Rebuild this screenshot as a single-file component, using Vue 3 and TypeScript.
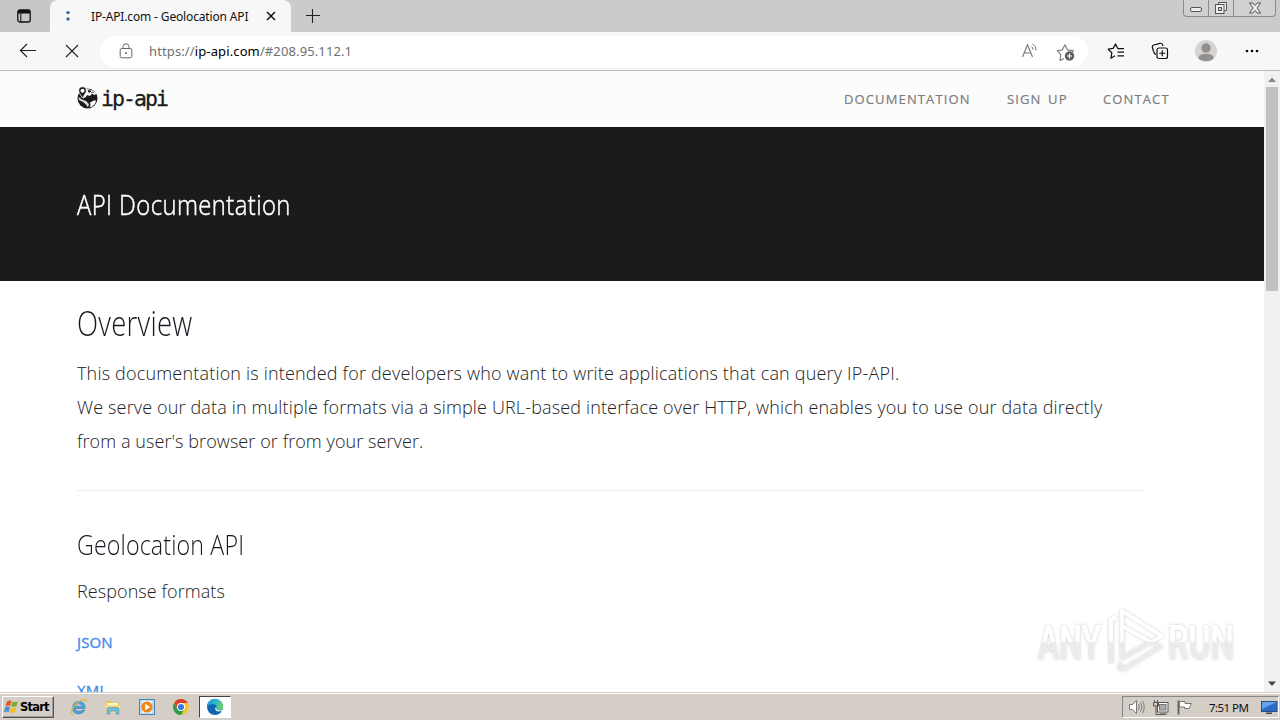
<script setup lang="ts">
interface NavLink { label: string; cls: string }

const links: NavLink[] = [
  { label: 'Documentation', cls: 'l1' },
  { label: 'Sign up', cls: 'l2' },
  { label: 'Contact', cls: 'l3' },
]
</script>

<template>
  <div class="screen">
    <header class="titlebar">
      <div class="tabmenu">
        <svg width="16" height="16" viewBox="0 0 16 16"><rect x="1.8" y="2" width="12.4" height="12" rx="2" fill="none" stroke="#111" stroke-width="1.3" /><path d="M2 3.2Q2 2 3.5 2h9Q14 2 14 3.5V5.6H2z" fill="#111" /><path d="M4.8 5v9" stroke="#111" /></svg>
      </div>
      <div class="tab">
        <svg class="fav" width="6" height="12" viewBox="0 0 6 12"><circle cx="3" cy="2.6" r="1.7" fill="#39699a" /><circle cx="3" cy="9" r="1.7" fill="#39699a" /></svg>
        <span class="tabtext">IP-API.com - Geolocation API</span>
        <svg class="tabx" width="10" height="10" viewBox="0 0 10 10"><path d="M1 1l8 8M9 1L1 9" stroke="#111" stroke-width="1.5" /></svg>
      </div>
      <svg class="plus" width="16" height="16" viewBox="0 0 16 16"><path d="M1 7.5h14M7.5 1v14" stroke="#222" stroke-width="1.1" /></svg>
      <div class="winbtns">
        <div class="wb"><svg width="14" height="8" viewBox="0 0 14 8"><rect x="1.500" y="1.500" width="11" height="4" rx="1.500" fill="#eee" stroke="#555" /></svg></div>
        <div class="wb"><svg width="14" height="14" viewBox="0 0 14 14"><path d="M4.500 3.500v-2h8v8h-2" fill="#eee" stroke="#555" /><rect x="1.500" y="3.500" width="8.500" height="9" fill="#eee" stroke="#555" /><rect x="4.500" y="6.500" width="3" height="3" fill="#ccc" stroke="#555" /></svg></div>
        <div class="wb wide"><svg width="14" height="12" viewBox="0 0 14 12"><path d="M1.500 1h3.200L7 3.600 9.300 1h3.200L9 6l3.500 5H9.300L7 8.400 4.700 11H1.500L5 6z" fill="#eee" stroke="#555" /></svg></div>
      </div>
    </header>

    <div class="toolbar">
      <svg class="back" width="18" height="16" viewBox="0 0 18 16"><path d="M17 7.500H1.500M8 1L1.500 7.500 8 14" fill="none" stroke="#222" stroke-width="1.200" /></svg>
      <svg class="stop" width="14" height="14" viewBox="0 0 14 14"><path d="M1 1l12 12M13 1L1 13" stroke="#222" stroke-width="1.100" /></svg>
      <div class="omni">
        <svg class="lock" width="14" height="16" viewBox="0 0 14 16"><rect x="1.200" y="5.500" width="11.600" height="9.300" rx="1.500" fill="none" stroke="#666" /><path d="M4 5.500V3.600Q4 .8 7 .8t3 2.800V5.500" fill="none" stroke="#666" /><circle cx="7" cy="10" r="1" fill="#666" /></svg>
        <span class="url">https://<b>ip-api.com</b>/#208.95.112.1</span>
        <svg class="read" width="18" height="16" viewBox="0 0 18 16"><path d="M1.500 14L6.500 1.800 11.500 14M3.200 10h6.600" fill="none" stroke="#777" stroke-width="1.100" /><path d="M10.500 3.500q1.500 1.200 1.500 3.200M11.500.8q4 2.500 3.500 6.500" fill="none" stroke="#777" /></svg>
        <svg class="addfav" width="20" height="19" viewBox="0 0 20 19"><path d="M8 15.500l-4 2 .8-5.600L1.300 7.700l5-.8L9 1.800l2.500 5.100 6 .9-2 2" fill="none" stroke="#777" stroke-width="1.100" stroke-linejoin="round" /><circle cx="13.500" cy="13" r="4.700" fill="#5c5c5c" /><path d="M11 13h5M13.500 10.500v5" stroke="#fff" stroke-width="1.200" /></svg>
      </div>
      <svg class="favs" width="18" height="17" viewBox="0 0 18 17"><path d="M8 12.700L4 15.200l.8-5.400L1.200 6.200l5-.8L8.500 1l2.300 4.500H17M10.500 9H17M10.500 12.800H17" fill="none" stroke="#111" stroke-width="1.250" stroke-linejoin="round" /></svg>
      <svg class="coll" width="18" height="18" viewBox="0 0 18 18"><path d="M5 12.300Q3.500 12 3 10.500L1.300 5.500Q1 3.500 2.800 3L9 1.300q2-.3 2.600 1.500L12 4" fill="none" stroke="#111" stroke-width="1.200" /><rect x="6" y="6" width="10.500" height="10.500" rx="2" fill="#f7f7f7" stroke="#111" stroke-width="1.200" /><path d="M8.300 11.250h6M11.250 8.300v6" stroke="#111" stroke-width="1.200" /></svg>
      <svg class="user" width="22" height="22" viewBox="0 0 22 22"><circle cx="11" cy="11" r="11" fill="#d6d4d2" /><circle cx="11" cy="8" r="4.700" fill="#928f8d" /><ellipse cx="11" cy="17.400" rx="7.500" ry="3.700" fill="#928f8d" /></svg>
      <svg class="more" width="14" height="4" viewBox="0 0 14 4"><circle cx="2" cy="2" r="1.300" /><circle cx="7" cy="2" r="1.300" /><circle cx="12" cy="2" r="1.300" /></svg>
    </div>

    <div class="view">
      <main class="page">
        <nav class="nav">
          <div class="brand">
            <svg width="22" height="24" viewBox="0 0 22 24"><circle cx="10.500" cy="12.500" r="10" fill="#1b1b1b" /><path d="M9 2.500L17 5l2.500 3-2.500 1-2-1.500-2 2.500-3-1-1 2-3 1.500 1-4z" fill="#fcfcfc" /><path d="M11 4.500l3 .5-2 1.500zM14 6.500l3-.5" stroke="#1b1b1b" stroke-width=".8" /><path d="M13 16.500l5-2.500 1 1.500-1.500 3-3.500 2.800-1-.3.500-2.500z" fill="#fcfcfc" /><path d="M1.500 11l3.500 2.500 4 1.500 3 3-1 3.500-2-3-3-2.500-4-2z" fill="#fcfcfc" opacity=".85" /><path d="M5.500 12L2 6.500Q.5 1 5.500.7 10.500 1 9 6.500z" fill="#1b1b1b" stroke="#fcfcfc" stroke-width=".8" /><circle cx="5.500" cy="4.800" r="2" fill="#fcfcfc" /></svg>
            <span class="logotext">ip-api</span>
          </div>
          <div class="links"><a v-for="l in links" :key="l.label" :class="l.cls">{{ l.label }}</a></div>
        </nav>
        <section class="hero"><h1>API Documentation</h1></section>
        <section class="body">
          <h2>Overview</h2>
          <p class="intro">
            <span class="p1">This documentation is intended for developers who want to write applications that can query IP-API.</span><br>
            <span class="p2">We serve our data in multiple formats via a simple URL-based interface over HTTP, which enables you to use our data directly</span><br>
            <span class="p3">from a user's browser or from your server.</span>
          </p>
          <hr>
          <h3>Geolocation API</h3>
          <p class="resp">Response formats</p>
          <a class="fmt">JSON</a>
          <a class="fmt xml">XML</a>
        </section>
      </main>
      <aside class="scroll">
        <svg width="16" height="16" viewBox="0 0 16 16"><path d="M4 11l4-4.500 4 4.500z" fill="#868686" /></svg>
        <div class="thumb"></div>
        <svg class="down" width="16" height="16" viewBox="0 0 16 16"><path d="M4 5.500l4 4.500 4-4.500z" fill="#444" /></svg>
      </aside>
    </div>

    <svg class="mark" width="212" height="78" viewBox="0 0 212 78">
      <defs>
        <filter id="glow" x="-20%" y="-20%" width="140%" height="140%"><feDropShadow dx="0" dy="0" stdDeviation="1.800" flood-color="#000" flood-opacity=".24" /></filter>
        <linearGradient id="fade" x1="0" y1="0" x2="0" y2="72" gradientUnits="userSpaceOnUse"><stop offset=".52" stop-color="#fff" /><stop offset=".56" stop-color="#ebebeb" /></linearGradient>
      </defs>
      <g filter="url(#glow)" fill="url(#fade)" stroke="url(#fade)">
        <text class="mt" x="4" y="56" textLength="63" lengthAdjust="spacingAndGlyphs">ANY</text>
        <text class="mt" x="134" y="56" textLength="66" lengthAdjust="spacingAndGlyphs">RUN</text>
        <path d="M77 60V17l5-3" fill="none" stroke-width="4" stroke-linejoin="round" />
        <path d="M88 8v47l40-22zM88 23l36 20M88 67l40-24M86 60v7" fill="none" stroke-width="3.600" stroke-linejoin="round" />
      </g>
    </svg>

    <footer class="taskbar">
      <div class="start">
        <svg width="17" height="16" viewBox="0 0 17 16"><path d="M4 2.500Q6.500.8 8.500 2L7.300 7Q5 6 2.500 7.300z" fill="#e5582c" /><path d="M9.500 2.500Q12 3.800 14.800 2.300L13.500 7Q11 8.400 8.300 7.200z" fill="#79ad36" /><path d="M2.200 8.300Q4.500 7 7 8L5.800 13Q3.500 12 .9 13.300z" fill="#4e8fd2" /><path d="M8 8.300Q10.500 9.500 13.200 8.200L12 13Q9.500 14.400 6.800 13.200z" fill="#f2b92b" /></svg>
        <span>Start</span>
      </div>
      <div class="task"><svg width="18" height="18" viewBox="0 0 18 18"><path d="M15 10.500H5Q5.500 13 8.500 13.300 11 13.300 12.500 12h2.300Q13 16 8.500 16 2.500 15.500 2.500 9.500 3 3.500 9 3.200q6.500.5 6 7.300M5.200 8.200h7Q11.500 5.600 8.800 5.600 6 5.700 5.200 8.200" fill="#45a5dc" fill-rule="evenodd" stroke="#2877b5" stroke-width=".5" /><path d="M3.500 16Q0 16.500 2 11.500 5.500 4.500 12 1.800q4.800-1.500 4.300 2" fill="none" stroke="#dfb83e" stroke-width="1.300" /></svg></div>
      <div class="task"><svg width="18" height="18" viewBox="0 0 18 18"><path d="M2 3h5l1 1.500h7.500V13H2z" fill="#e4c25c" /><path d="M3 5h11v3H3z" fill="#fff7cd" /><path d="M1.500 7h14.800v7.500H1.500z" fill="#f4dc86" /><path d="M3 16v-4.500Q3 9.500 5 9.500h8q2 0 2 2V16h-3v-3H6v3z" fill="#75b9dc" stroke="#4b93b9" stroke-width=".6" /></svg></div>
      <div class="task"><svg width="18" height="18" viewBox="0 0 18 18"><rect x="1.500" y="1.500" width="15" height="15" fill="#bddcf2" stroke="#4c83b5" /><rect x="4" y="3" width="10" height="12" fill="#e8f3fa" /><circle cx="9" cy="9" r="5.600" fill="#ef8519" /><path d="M7.200 5.800L12.200 9l-5 3.200z" fill="#fff" /></svg></div>
      <div class="task"><svg width="18" height="18" viewBox="0 0 18 18"><circle cx="9" cy="9" r="8" fill="#f6c62d" /><path d="M2.070 5A8 8 0 0 1 15.930 5H9A4 4 0 0 0 5.500 11z" fill="#d93f32" /><path d="M2.070 5A8 8 0 0 0 9 17L12.500 11A4 4 0 0 1 5.500 11z" fill="#2f9b50" /><circle cx="9" cy="9" r="4" fill="#fff" /><circle cx="9" cy="9" r="3.100" fill="#3d79d6" /></svg></div>
      <div class="task active"><svg width="18" height="18" viewBox="0 0 18 18"><defs><linearGradient id="eg" x1="0" y1="0" x2="1" y2=".3"><stop offset="0" stop-color="#1b8fd8" /><stop offset=".6" stop-color="#2bbbc8" /><stop offset="1" stop-color="#62d568" /></linearGradient></defs><circle cx="9" cy="9" r="8" fill="#1265b4" /><path d="M1 9A8 8 0 0 1 17 8.500Q17 12 13 12H10.500Q9.500 11.500 10.500 10 11 6.500 7.500 6 3 6 1 9" fill="url(#eg)" /><path d="M10.500 10Q9.500 11.800 12 12.300 14.500 12.700 16.800 11.500L16.300 12.800Q12.500 14 10.200 12.800 8.500 11.300 9.500 9.200z" fill="#fff" /></svg></div>
      <div class="tray">
        <svg width="17" height="16" viewBox="0 0 17 16"><path d="M1.500 5.500h3L8.500 1.500v13L4.500 10.500h-3z" fill="#fff" stroke="#777" /><path d="M10.500 5q1.800 3 0 6M12.500 3.500q3 4.500 0 9M14.500 2q3.500 6 0 12" fill="none" stroke="#777" stroke-width=".9" /></svg>
        <svg width="17" height="17" viewBox="0 0 17 17"><rect x="5.500" y="3.500" width="10.500" height="9.500" fill="#fff" stroke="#555" /><rect x="7.500" y="5.500" width="6.500" height="5.500" fill="#aaa" stroke="#777" /><path d="M1.500 3.500h5v3.500h-5zM2.500 1v2M5.500 1v2M4 7v8.500h9M8 15h7" fill="none" stroke="#555" /></svg>
        <svg width="17" height="16" viewBox="0 0 17 16"><path d="M2.500 15.500V1.500" stroke="#666" stroke-width="2" /><path d="M3.500 2.500h5.500v2h6.500L13 9.500H8.500v-1.500h-5z" fill="#fff" stroke="#777" /></svg>
        <span class="clock">7:51 PM</span>
        <svg width="17" height="15" viewBox="0 0 17 15"><rect x=".5" y="1.500" width="15.500" height="10" fill="#2c6cc8" stroke="#2a4a80" /><path d="M1 2h15L1 9z" fill="#64a3e8" /><path d="M5 12.500h6v1.500H5z" fill="#445" /></svg>
      </div>
    </footer>
  </div>
</template>

<style>
body { margin: 0; overflow: hidden; }
</style>

<style scoped>
* { box-sizing: border-box; }
.screen { position: relative; width: 1280px; height: 720px; display: flex; flex-direction: column; background: #fff; overflow: hidden; font-family: "Noto Sans", sans-serif; white-space: nowrap; }
svg { display: block; flex: none; }
.titlebar { height: 32px; flex: none; background: #cbcbcb; display: flex; align-items: flex-start; }
.tabmenu { width: 50px; height: 32px; padding: 8px 0 0 16px; background: #c6c6c6; border-bottom-right-radius: 7px; }
.tab { width: 241px; height: 32px; background: #f7f7f7; border-radius: 8px 8px 0 0; display: flex; align-items: center; padding-left: 15px; }
.tabtext { width: 158px; margin: 0 0 0 20px; font-size: 12px; letter-spacing: -.15px; color: #111; }
.tabx { margin-left: 17px; }
.plus { margin: 8px 0 0 14px; }
.winbtns { margin: 0 4px 0 auto; display: flex; height: 17px; border: 1px solid #8b8b8b; border-top: 0; border-radius: 0 0 4px 4px; background: #d0d0d0; }
.wb { width: 25px; display: flex; align-items: center; justify-content: center; border-right: 1px solid #8b8b8b; }
.wb:first-child svg { margin-top: 4px; }
.wb.wide { width: 41px; border: 0; }
.toolbar { height: 39px; flex: none; background: #f7f7f7; border-bottom: 1px solid #bdbdbd; display: flex; align-items: center; }
.back { margin-left: 19px; }
.stop { margin-left: 28px; }
.omni { width: 988px; height: 31px; margin-left: 21px; border-radius: 16px; background: #fff; display: flex; align-items: center; }
.lock { margin-left: 19px; }
.url { width: 300px; margin-left: 16px; font-size: 13px; color: #707070; letter-spacing: .12px; }
.url b { font-weight: 400; color: #000; }
.read { margin-left: auto; }
.addfav { margin: 2px 12px 0 17px; }
.favs { margin-left: 19px; }
.coll { margin-left: 26px; }
.user { margin-left: 26px; }
.more { margin-left: 28px; }
.view { height: 621px; flex: none; display: flex; }
.page { width: 1264px; height: 621px; overflow: hidden; background: #fff; }
.nav { height: 56px; background: #fcfcfc; display: flex; justify-content: space-between; padding-left: 77px; }
.brand { display: flex; padding-top: 15px; }
.logotext { margin: -2px 0 0 2px; font: 21.500px/30px "DejaVu Sans Mono", monospace; letter-spacing: -1.950px; color: #1b1b1b; -webkit-text-stroke: .3px #1b1b1b; }
.links { display: flex; width: 420px; font: 500 13px/56px "Open Sans", sans-serif; color: #7c7c7c; text-transform: uppercase; -webkit-text-stroke: .2px #7c7c7c; }
.links a { letter-spacing: 1.130px; word-spacing: 2px; }
.l1 { width: 163px; }
.l2 { width: 96px; }
.hero { height: 154px; background: #1b1b1b; padding: 57px 0 0 77px; }
h1, h2, h3, p { margin: 0; }
h1 { font: 300 28px/40px "Open Sans", sans-serif; color: #fff; letter-spacing: .5px; transform: scaleX(.85); transform-origin: 0 0; -webkit-text-stroke: .5px #fff; }
.body { padding-left: 77px; display: flex; flex-direction: column; align-items: flex-start; }
h2 { margin-top: 20px; font: 300 34px/44px "Open Sans", sans-serif; color: #161a20; letter-spacing: .3px; transform: scaleX(.81); transform-origin: 0 0; }
.intro { margin-top: 11px; font: 300 18px/34px "Open Sans", sans-serif; color: #222; }
.p1 { letter-spacing: .183px; }
.p2 { letter-spacing: .147px; }
.p3 { letter-spacing: .08px; }
hr { width: 1067px; height: 1px; margin: 32px 0 0; border: 0; background: #eee; }
h3 { margin-top: 33px; font: 300 28px/40px "Open Sans", sans-serif; color: #161a20; letter-spacing: .15px; transform: scaleX(.83); transform-origin: 0 0; }
.resp { margin-top: 10px; font: 300 18px/34px "Open Sans", sans-serif; letter-spacing: .08px; color: #222; }
.fmt { margin-top: 22px; font: 500 15px/24px "Open Sans", sans-serif; color: #3f8be6; letter-spacing: .15px; -webkit-text-stroke: .35px #3f8be6; }
.fmt.xml { margin-top: 24px; }
.scroll { width: 16px; background: #f1f1f1; display: flex; flex-direction: column; align-items: center; }
.thumb { width: 12px; height: 204px; background: #c1c1c1; }
.down { margin: auto 0 0; }
.mark { position: absolute; left: 1034px; top: 603px; }
.mt { font: 500 49px Roboto, sans-serif; stroke-width: 0; }
.taskbar { height: 28px; flex: none; background: #d4cec7; border-top: 1px solid #d4cec7; box-shadow: inset 0 1px #fff; display: flex; align-items: center; }
.start { width: 52px; height: 22px; margin: 1px 14px 0 2px; display: flex; align-items: center; border: 1px solid; border-color: #fff #555 #555 #fff; box-shadow: inset -1px -1px #999; font: 700 11.500px "DejaVu Sans", sans-serif; letter-spacing: -.8px; }
.task { width: 32px; height: 22px; margin: 1px 2px 0 0; display: flex; align-items: center; justify-content: center; padding-right: 4px; }
.task.active { padding: 0; border: 1px solid; border-color: #444 #fff #fff #444; background: #fff; margin-left: -2px; }
.task:nth-child(2) { margin-left: -3px; }
.tray { width: 157px; height: 22px; margin: 1px 1px 0 auto; border: 1px solid; border-color: #888 #fff #fff #888; display: flex; align-items: center; padding-left: 5px; }
.tray svg { margin-right: 7px; }
.tray svg:last-child { margin-right: 0; }
.clock { width: 44px; margin: 0 11px 0 9px; font-size: 11.500px; letter-spacing: -.55px; color: #111; }
</style>
